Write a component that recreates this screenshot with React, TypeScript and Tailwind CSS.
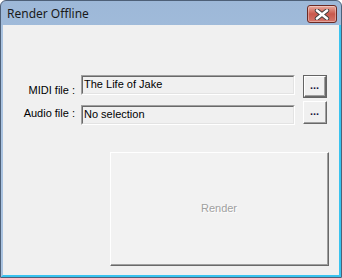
import React from 'react';

function CloseButton() {
  return (
    <div className="w-[30px] h-[18px] rounded-[3px] border border-[#6b2a24] bg-gradient-to-b from-[#e8a99d] via-[#c9584c] to-[#d4756a] flex items-center justify-center shadow-[inset_0_0_0_1px_rgba(255,255,255,0.35)]">
      <svg width="16" height="11" viewBox="0 0 16 11">
        <path d="M3 1.5 L13 9.5 M13 1.5 L3 9.5" stroke="#3c3c3c" strokeWidth="4.4" strokeLinecap="round" />
        <path d="M3 1.5 L13 9.5 M13 1.5 L3 9.5" stroke="#ffffff" strokeWidth="2.6" strokeLinecap="round" />
      </svg>
    </div>
  );
}

function TextBox({ value }: { value: string }) {
  return (
    <div className="w-[214px] h-[20px] border-t border-l border-t-[#a0a0a0] border-l-[#a0a0a0] border-b border-r border-b-white border-r-white">
      <div className="h-full border-t border-l border-t-[#696969] border-l-[#696969] border-b border-r border-b-[#e3e3e3] border-r-[#e3e3e3] bg-[#f0f0f0] pl-[1px] text-[11px] leading-[14px] text-black whitespace-nowrap">
        {value}
      </div>
    </div>
  );
}

function DotsButton({ active }: { active?: boolean }) {
  return (
    <div className={`w-[24px] h-[23px] ${active ? 'border border-[#646464]' : ''}`}>
      <div className="h-full border-t border-l border-t-white border-l-white border-b border-r border-b-[#696969] border-r-[#696969]">
        <div className="h-full border-b border-r border-b-[#a0a0a0] border-r-[#a0a0a0] flex items-center justify-center text-[11px] font-bold leading-none text-[#1a1a40] pb-[2px]">
          ...
        </div>
      </div>
    </div>
  );
}

export default function App() {
  return (
    <div className="w-[342px] h-[278px] font-['Liberation_Sans',Arial,sans-serif]">
      <div className="w-full h-full rounded-t-[6px] border border-[#4e6078] bg-gradient-to-b from-[#9db8d8] to-[#bcd2ea] flex flex-col">
        {/* Title bar */}
        <div className="h-[24px] flex items-start justify-between pl-[6px] pr-[4px]">
          <span className="mt-[5px] text-[12px] leading-[16px] text-[#1a1a1a] font-['Noto_Sans',sans-serif]">Render Offline</span>
          <div className="mt-[4px]">
            <CloseButton />
          </div>
        </div>

        {/* Client area */}
        <div className="flex-1 border-l-2 border-l-[#aac3e0] border-r-2 border-r-[#39c3ef] border-b-2 border-b-[#39c3ef]">
          <div className="h-full bg-[#f0f0f0] pt-[50px] text-black">
            {/* MIDI row */}
            <div className="flex items-start h-[22px]">
              <div className="w-[72px] text-right text-[11px] leading-[13px] mt-[9px] whitespace-nowrap">MIDI file :</div>
              <div className="ml-[6px]">
                <TextBox value="The Life of Jake" />
              </div>
              <div className="ml-[8px]">
                <DotsButton active />
              </div>
            </div>

            {/* Audio row */}
            <div className="flex items-start h-[24px] mt-[4px]">
              <div className="w-[72px] text-right text-[11px] leading-[13px] mt-[6px] whitespace-nowrap">Audio file :</div>
              <div className="ml-[6px] mt-[4px]">
                <TextBox value="No selection" />
              </div>
              <div className="ml-[8px]">
                <DotsButton />
              </div>
            </div>

            {/* Render button */}
            <div className="ml-[107px] mt-[27px] w-[219px] h-[114px] border-t border-l border-t-white border-l-white border-b border-r border-b-[#696969] border-r-[#696969]">
              <div className="h-full border-b border-r border-b-[#a0a0a0] border-r-[#a0a0a0] bg-[#f2f2f2] flex items-center justify-center">
                <span className="text-[11px] text-[#a0a0a0] [text-shadow:1px_1px_0_#ffffff]">Render</span>
              </div>
            </div>
          </div>
        </div>
      </div>
    </div>
  );
}
